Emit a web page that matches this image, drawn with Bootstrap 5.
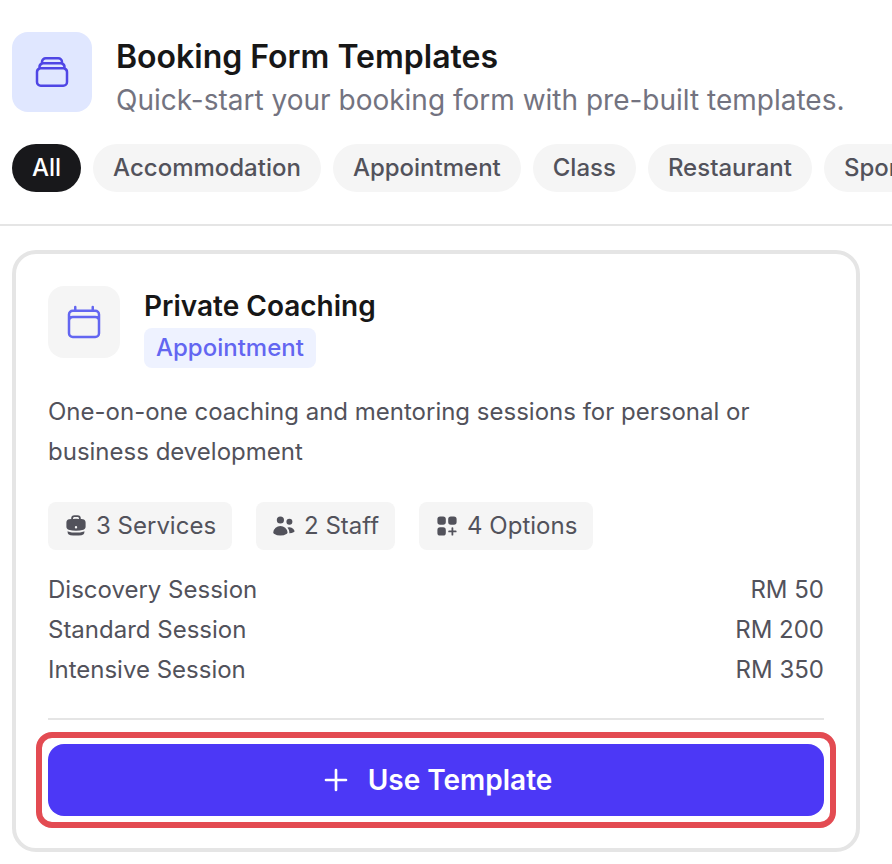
<!DOCTYPE html>
<html lang="en"><head><meta charset="utf-8">
<title>Booking Form Templates</title>
<link rel="stylesheet" href="https://cdn.jsdelivr.net/npm/bootstrap@5.3.0/dist/css/bootstrap.min.css">
<style>
html,body{height:100%;overflow:hidden}
body{font-family:Inter,"Liberation Sans",sans-serif;background:#fff;color:#171717;width:892px}
.top-area{padding:32px 0 0 12px}
.hero-ico{width:80px;height:80px;border-radius:16px;background:#e0e7ff;flex:none}
.hero-text{margin-top:3px}
.hero-title{font-size:32px;font-weight:600;line-height:44px;margin:0;color:#171717}
.hero-sub{font-size:28px;line-height:42px;color:#737380;margin:0;white-space:nowrap}
.head-gap{gap:24px}
.chips{display:flex;gap:12px;margin-top:23px;white-space:nowrap;overflow:hidden}
.chip{height:48px;border-radius:24px;background:#f5f5f5;color:#52525b;font-size:24px;font-weight:500;padding:0 20px;line-height:48px;flex:none}
.chip-on{background:#18181b;color:#fff}
.rule-top{height:2px;background:#e5e5e5;margin-top:32px}
.tpl{margin:24px 32px 0 12px;border:4px solid #e5e5e5;border-radius:24px;padding:32px;height:602px}
.tpl-ico{width:72px;height:72px;border-radius:16px;background:#f5f5f5;flex:none}
.tpl-name{font-size:28px;font-weight:600;line-height:40px;margin:0 0 2px;color:#171717}
.tpl-tag{display:inline-block;height:40px;line-height:40px;padding:0 12px;border-radius:8px;background:#eef2ff;color:#6366f1;font-size:24px;font-weight:500;vertical-align:top}
.tpl-desc{font-size:24px;line-height:40px;color:#52525b;margin:24px 0 0}
.stat{display:flex;align-items:center;gap:8px;height:48px;padding:0 16px;border-radius:8px;background:#f5f5f5;color:#52525b;font-size:24px}
.stats{display:flex;gap:24px;margin-top:30px}
.svc{display:flex;justify-content:space-between;font-size:24px;line-height:40px;color:#52525b}
.svcs{margin-top:20px;padding-bottom:28px;border-bottom:2px solid #e5e5e5}
.use-frame{margin:12px -12px 0;padding:6px;border:6px solid #e34b52;border-radius:16px}
.use-btn{display:flex;align-items:center;justify-content:center;gap:16px;width:100%;height:72px;border:0;border-radius:16px;background:#4c38f6;color:#fff;font-size:28px;font-weight:600}
.use-btn:hover{background:#4c38f6;color:#fff}
</style></head>
<body>
<div class="top-area">
  <div class="d-flex align-items-start head-gap">
    <div class="hero-ico d-flex align-items-center justify-content-center">
      <svg width="40" height="40" viewBox="0 0 24 24" fill="none" stroke="#4f46e5" stroke-width="1.5" stroke-linecap="round" stroke-linejoin="round"><path d="M6 6.878V6a2.250 2.250 0 0 1 2.250-2.250h7.500A2.250 2.250 0 0 1 18 6v.878m-12 0c.235-.083.487-.128.75-.128h10.500c.263 0 .515.045.75.128m-12 0A2.250 2.250 0 0 0 4.500 9v.878m13.500-3A2.250 2.250 0 0 1 19.500 9v.878m0 0a2.246 2.246 0 0 0-.75-.128H5.250c-.263 0-.515.045-.75.128m15 0A2.250 2.250 0 0 1 21 12v6a2.250 2.250 0 0 1-2.250 2.250H5.250A2.250 2.250 0 0 1 3 18v-6c0-.966.610-1.800 1.500-2.122"/></svg>
    </div>
    <div class="hero-text">
      <h1 class="hero-title">Booking Form Templates</h1>
      <p class="hero-sub">Quick-start your booking form with pre-built templates.</p>
    </div>
  </div>
  <div class="chips">
    <span class="chip chip-on">All</span>
    <span class="chip">Accommodation</span>
    <span class="chip">Appointment</span>
    <span class="chip">Class</span>
    <span class="chip">Restaurant</span>
    <span class="chip">Sports</span>
  </div>
</div>
<div class="rule-top"></div>
<div class="tpl">
  <div class="d-flex head-gap">
    <div class="tpl-ico d-flex align-items-center justify-content-center">
      <svg width="40" height="40" viewBox="0 0 24 24" fill="none" stroke="#6366f1" stroke-width="1.5" stroke-linecap="round" stroke-linejoin="round"><path d="M6.750 3v2.250M17.250 3v2.250M3 18.750V7.500a2.250 2.250 0 0 1 2.250-2.250h13.500A2.250 2.250 0 0 1 21 7.500v11.250m-18 0A2.250 2.250 0 0 0 5.250 21h13.500A2.250 2.250 0 0 0 21 18.750m-18 0v-7.500A2.250 2.250 0 0 1 5.250 9h13.500A2.250 2.250 0 0 1 21 11.250v7.500"/></svg>
    </div>
    <div>
      <h2 class="tpl-name">Private Coaching</h2>
      <span class="tpl-tag">Appointment</span>
    </div>
  </div>
  <p class="tpl-desc">One-on-one coaching and mentoring sessions for personal or business development</p>
  <div class="stats">
    <div class="stat"><svg width="24" height="24" viewBox="0 0 20 20" fill="#52525b"><path fill-rule="evenodd" d="M6 3.750A2.750 2.750 0 0 1 8.750 1h2.500A2.750 2.750 0 0 1 14 3.750v.443c.572.055 1.140.122 1.706.2C17.053 4.582 18 5.750 18 7.070v3.469c0 1.126-.694 2.191-1.830 2.540-1.952.599-4.024.921-6.170.921s-4.219-.322-6.170-.921C2.694 12.730 2 11.665 2 10.539V7.070c0-1.321.947-2.489 2.294-2.676A41.047 41.047 0 0 1 6 4.193V3.750Zm6.500 0v.325a41.622 41.622 0 0 0-5 0V3.750c0-.690.560-1.250 1.250-1.250h2.500c.690 0 1.250.560 1.250 1.250ZM10 10a1 1 0 0 0-1 1v.010a1 1 0 0 0 1 1h.010a1 1 0 0 0 1-1V11a1 1 0 0 0-1-1H10Z" clip-rule="evenodd"/><path d="M3 15.055v-.684c.126.053.255.100.390.142 2.092.642 4.313.987 6.610.987 2.297 0 4.518-.345 6.610-.987.135-.041.264-.089.390-.142v.684c0 1.347-.985 2.530-2.363 2.686a41.454 41.454 0 0 1-9.274 0C3.985 17.585 3 16.402 3 15.055Z"/></svg>3 Services</div>
    <div class="stat"><svg width="24" height="24" viewBox="0 0 20 20" fill="#52525b"><path d="M7 8a3 3 0 1 0 0-6 3 3 0 0 0 0 6ZM14.500 9a2.500 2.500 0 1 0 0-5 2.500 2.500 0 0 0 0 5ZM1.615 16.428a1.224 1.224 0 0 1-.569-1.175 6.002 6.002 0 0 1 11.908 0c.058.467-.172.920-.570 1.174A9.953 9.953 0 0 1 7 18a9.953 9.953 0 0 1-5.385-1.572ZM14.500 16h-.106c.070-.297.088-.611.048-.933a7.470 7.470 0 0 0-1.588-3.755 4.502 4.502 0 0 1 5.874 2.636.818.818 0 0 1-.360.980A7.465 7.465 0 0 1 14.500 16Z"/></svg>2 Staff</div>
    <div class="stat"><svg width="24" height="24" viewBox="0 0 20 20" fill="#52525b"><path d="M2 4.250A2.250 2.250 0 0 1 4.250 2h2.500A2.250 2.250 0 0 1 9 4.250v2.500A2.250 2.250 0 0 1 6.750 9h-2.500A2.250 2.250 0 0 1 2 6.750v-2.500ZM2 13.250A2.250 2.250 0 0 1 4.250 11h2.500A2.250 2.250 0 0 1 9 13.250v2.500A2.250 2.250 0 0 1 6.750 18h-2.500A2.250 2.250 0 0 1 2 15.750v-2.500ZM11 4.250A2.250 2.250 0 0 1 13.250 2h2.500A2.250 2.250 0 0 1 18 4.250v2.500A2.250 2.250 0 0 1 15.750 9h-2.500A2.250 2.250 0 0 1 11 6.750v-2.500ZM15.250 11.750a.750.750 0 0 0-1.500 0v2h-2a.750.750 0 0 0 0 1.500h2v2a.750.750 0 0 0 1.500 0v-2h2a.750.750 0 0 0 0-1.500h-2v-2Z"/></svg>4 Options</div>
  </div>
  <div class="svcs">
    <div class="svc"><span>Discovery Session</span><span>RM 50</span></div>
    <div class="svc"><span>Standard Session</span><span>RM 200</span></div>
    <div class="svc"><span>Intensive Session</span><span>RM 350</span></div>
  </div>
  <div class="use-frame">
    <button type="button" class="btn use-btn"><svg width="32" height="32" viewBox="0 0 24 24" fill="none" stroke="#fff" stroke-width="2" stroke-linecap="round" stroke-linejoin="round"><path d="M12 4.500v15m7.500-7.500h-15"/></svg>Use Template</button>
  </div>
</div>
<script src="https://cdn.jsdelivr.net/npm/bootstrap@5.3.0/dist/js/bootstrap.bundle.min.js"></script>
</body></html>
